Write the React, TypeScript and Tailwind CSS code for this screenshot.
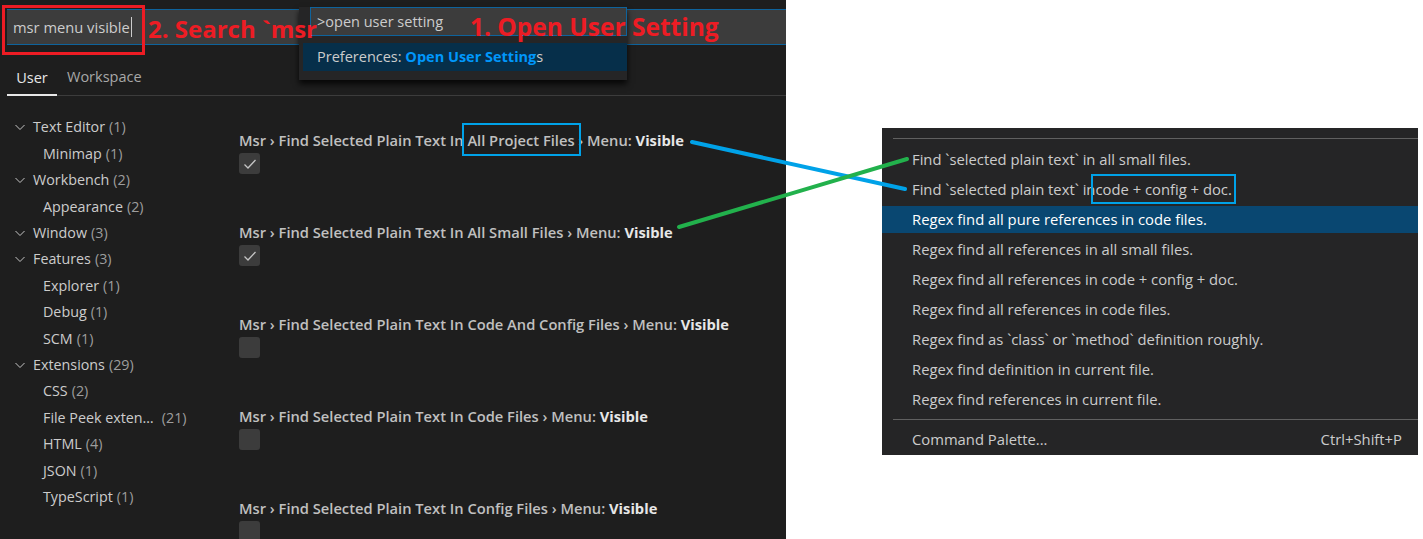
const font = { fontFamily: '"Open Sans", "Noto Sans", sans-serif' };

type TreeItem = { label: string; count: number; child?: boolean; chevron?: boolean };

const tree: TreeItem[] = [
  { label: "Text Editor", count: 1, chevron: true },
  { label: "Minimap", count: 1, child: true },
  { label: "Workbench", count: 2, chevron: true },
  { label: "Appearance", count: 2, child: true },
  { label: "Window", count: 3, chevron: true },
  { label: "Features", count: 3, chevron: true },
  { label: "Explorer", count: 1, child: true },
  { label: "Debug", count: 1, child: true },
  { label: "SCM", count: 1, child: true },
  { label: "Extensions", count: 29, chevron: true },
  { label: "CSS", count: 2, child: true },
  { label: "File Peek exten…", count: 21, child: true },
  { label: "HTML", count: 4, child: true },
  { label: "JSON", count: 1, child: true },
  { label: "TypeScript", count: 1, child: true },
];

const settings = [
  { name: "All Project Files", checked: true, boxed: true },
  { name: "All Small Files", checked: true },
  { name: "Code And Config Files", checked: false },
  { name: "Code Files", checked: false },
  { name: "Config Files", checked: false },
];

const menuItems = [
  "Find `selected plain text` in all small files.",
  "Find `selected plain text` in ",
  "Regex find all pure references in code files.",
  "Regex find all references in all small files.",
  "Regex find all references in code + config + doc.",
  "Regex find all references in code files.",
  "Regex find as `class` or `method` definition roughly.",
  "Regex find definition in current file.",
  "Regex find references in current file.",
];

function Chevron() {
  return (
    <svg width="12" height="12" viewBox="0 0 12 12" className="mr-[7px]">
      <polyline points="1.5,4 6,8.5 10.5,4" fill="none" stroke="#c5c5c5" strokeWidth="1" />
    </svg>
  );
}

function Check() {
  return (
    <svg width="16" height="16" viewBox="0 0 16 16">
      <polyline points="2.5,8.5 6,12 13.5,4" fill="none" stroke="#c5c5c5" strokeWidth="1.3" />
    </svg>
  );
}

export default function App() {
  return (
    <div className="relative flex w-[1423px] h-[539px] bg-white overflow-hidden" style={font}>
      {/* settings editor */}
      <div className="w-[786px] h-full bg-[#1e1e1e] flex flex-col overflow-hidden">
        <div className="shrink-0 pt-[9px] pl-[7px]">
          <div className="h-[36px] bg-[#3c3c3c] border-y border-[#0e639c] flex items-center pl-[6px] text-[14.7px] text-[#cccccc]">
            msr menu visible
            <span className="ml-px w-px h-[20px] bg-[#cccccc]" />
          </div>
        </div>
        <div className="shrink-0 mt-[15px] ml-[7px] flex items-end h-[36px] border-b border-[#3c3c3c] text-[14.5px]">
          <div className="w-[50px] h-full flex items-center justify-center text-[#e7e7e7] border-b-2 border-[#e7e7e7] -mb-px">User</div>
          <div className="h-full flex items-center pl-[10px] pb-[2px] text-[#a8a8a8]">Workspace</div>
        </div>
        <div className="flex flex-1 min-h-0">
          <div className="w-[232px] pt-[18px]">
            {tree.map((t) => (
              <div key={t.label} className={`h-[26.4px] flex items-center text-[14.3px] ${t.child ? "pl-[43px]" : "pl-[14px]"}`}>
                {t.chevron && <Chevron />}
                <span className="text-[#cccccc]">{t.label}</span>
                <span className={`text-[#9d9d9d] ${t.label.startsWith("File") ? "ml-[8px]" : "ml-[4px]"}`}>({t.count})</span>
              </div>
            ))}
          </div>
          <div className="pl-[7px] pt-[34px] flex flex-col gap-[48px]">
            {settings.map((s) => (
              <div key={s.name} className="shrink-0 flex flex-col">
                <div className="h-[20px] flex items-center text-[14.7px] font-semibold text-[#c0c0c0] whitespace-nowrap">
                  Msr › Find Selected Plain Text In&nbsp;
                  {s.boxed ? (
                    <span className="relative">
                      {s.name}
                      <span className="absolute -left-[5px] -right-[6px] -top-[6px] -bottom-[5px] border-2 border-[#00a2e8]" />
                    </span>
                  ) : (
                    s.name
                  )}
                  &nbsp;› Menu:&nbsp;<span className="font-bold text-[#e7e7e7]">Visible</span>
                </div>
                <div className="mt-[3px] w-[21px] h-[21px] rounded-[3px] bg-[#3c3c3c] flex items-center justify-center">
                  {s.checked && <Check />}
                </div>
              </div>
            ))}
          </div>
        </div>
      </div>

      {/* context menu */}
      <div className="ml-[96px] mt-[128px] w-[536px] h-[327px] bg-[#252526] flex flex-col text-[14.8px] text-[#cccccc]">
        <div className="mt-[10px] ml-[11px] h-px bg-[#606060]" />
        <div className="mt-[5px]">
          {menuItems.map((m, i) => (
            <div key={i} className="h-[30px] flex items-center">
              <div className={`h-[27px] w-full flex items-center pl-[30px] whitespace-nowrap ${i === 2 ? "bg-[#094771] text-white" : ""}`}>
                {m}
                {i === 1 && (
                  <span className="outline-2 outline-[#00a2e8] outline-offset-[2px]">code + config + doc.</span>
                )}
              </div>
            </div>
          ))}
        </div>
        <div className="mt-[5px] ml-[11px] h-px bg-[#606060]" />
        <div className="h-[30px] mt-[4px] flex items-center justify-between pl-[30px] pr-[16px]">
          <span>Command Palette...</span>
          <span>Ctrl+Shift+P</span>
        </div>
      </div>

      {/* annotations and overlays */}
      <div className="absolute left-[2px] top-[5px] w-[143px] h-[50px] border-[3px] border-[#ed1c24]" />

      <div className="absolute left-[299px] top-[7px] w-[328px] h-[73px] bg-[#252526] shadow-[0_4px_6px_rgba(0,0,0,0.8)] flex flex-col">
        <div className="ml-[11px] h-[29px] bg-[#3c3c3c] border border-[#0e639c] flex items-center pl-[6px] text-[14.5px] text-[#cccccc]">
          &gt;open user setting
        </div>
        <div className="mt-[7px] ml-[4px] h-[28px] bg-[#062f4a] flex items-center pl-[14px] text-[14.5px] text-[#cccccc]">
          Preferences:&nbsp;<span className="font-bold text-[#0097fb]">Open User Setting</span>s
        </div>
      </div>

      <div className="absolute left-[148px] top-[17px] text-[24px] font-bold text-[#ed1c24] leading-none">2. Search `msr</div>
      <div className="absolute left-[470px] top-[15px] text-[24.5px] font-bold text-[#ed1c24] leading-none">1. Open User Setting</div>

      <svg className="absolute inset-0 pointer-events-none" width="1423" height="539">
        <line x1="692" y1="142" x2="905" y2="189" stroke="#00a2e8" strokeWidth="4" strokeLinecap="round" />
        <line x1="679" y1="227" x2="907" y2="159" stroke="#22b14c" strokeWidth="4" strokeLinecap="round" />
      </svg>
    </div>
  );
}
